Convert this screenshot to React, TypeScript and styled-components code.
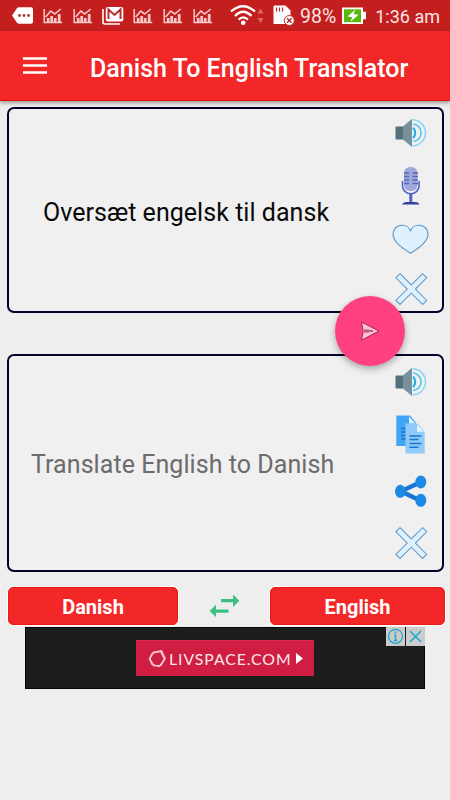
import React from "react";
import styled, { createGlobalStyle } from "styled-components";

const GlobalStyle = createGlobalStyle`
  * { box-sizing: border-box; }
  body { margin: 0; background: #eeeeee; font-family: Roboto, sans-serif; }
  svg { display: block; flex: none; }
`;

const Screen = styled.div`
  width: 450px;
  height: 800px;
  display: flex;
  flex-direction: column;
  background: #eeeeee;
  overflow: hidden;
`;

const StatusBar = styled.div`
  height: 31px;
  flex: none;
  display: flex;
  align-items: center;
  background: #c41f1f;
  color: #fbe4e4;
`;

const StatusText = styled.span<{ $left: number; $size: number }>`
  margin-left: ${(p) => p.$left}px;
  margin-top: 2px;
  font-size: ${(p) => p.$size}px;
  line-height: 24px;
  white-space: nowrap;
`;

const AppBar = styled.header`
  height: 70px;
  flex: none;
  display: flex;
  align-items: center;
  padding-left: 23px;
  background: #f32727;
  border-bottom: 1px solid #e21111;
  box-shadow: 0 2px 4px rgba(0, 0, 0, 0.35);
  z-index: 1;
`;

const Title = styled.h1`
  margin: 6px 0 0 43px;
  color: #fff;
  font-size: 25px;
  font-weight: 500;
  line-height: 32px;
  letter-spacing: 0.02px;
  white-space: nowrap;
`;

const Content = styled.main`
  display: flex;
  flex-direction: column;
  padding: 6px 6px 0 7px;
`;

const Panel = styled.section<{ $height: number }>`
  position: relative;
  height: ${(p) => p.$height}px;
  display: flex;
  border: 2px solid #02022c;
  border-radius: 7px;
  background: #f0f0f0;
  & + & { margin-top: 41px; }
`;

const PanelText = styled.div<{ $left: number; $top: number; $color: string; $spacing: number }>`
  flex: 1;
  padding: ${(p) => p.$top}px 0 0 ${(p) => p.$left}px;
  color: ${(p) => p.$color};
  font-size: 25px;
  line-height: 32px;
  letter-spacing: ${(p) => p.$spacing}px;
  white-space: nowrap;
`;

const Tools = styled.div<{ $top: number; $gap: number }>`
  width: 40px;
  margin-right: 12px;
  padding-top: ${(p) => p.$top}px;
  display: flex;
  flex-direction: column;
  gap: ${(p) => p.$gap}px;
`;

const SendButton = styled.button`
  position: absolute;
  left: 326px;
  top: 186.5px;
  width: 70px;
  height: 70px;
  padding: 0;
  border: 0;
  border-radius: 50%;
  display: grid;
  place-items: center;
  background: #ff4081;
  box-shadow: 0 3px 7px rgba(0, 0, 0, 0.3);
  z-index: 2;
`;

const LanguageRow = styled.div`
  display: flex;
  align-items: center;
  justify-content: space-between;
  margin: 15px -1px 0 1px;
  height: 38px;
`;

const LanguageButton = styled.button<{ $width: number }>`
  width: ${(p) => p.$width}px;
  height: 38px;
  padding: 2px 0 0;
  border: 1px solid #e91a1a;
  border-radius: 5px;
  background: #f32727;
  box-shadow: 0 0 0 1px #fff;
  color: #fff;
  font: 700 20px/24px Roboto, sans-serif;
`;

const Advert = styled.div`
  align-self: center;
  margin: 2px 1px 0 0;
  width: 400px;
  height: 62px;
  position: relative;
  display: flex;
  align-items: center;
  justify-content: center;
  background: #1c1e1d;
  border: 1px solid #050505;
`;

const AdvertBrand = styled.div`
  width: 178px;
  height: 36px;
  display: flex;
  align-items: center;
  padding-left: 12px;
  background: #cf1e42;
  border-top: 1px solid #e22a50;
  color: #fde6ea;
`;

const BrandName = styled.span`
  margin: 0 4px 0 3px;
  font: 400 15.8px/20px Lato, sans-serif;
  letter-spacing: 0.93px;
`;

const AdvertControls = styled.div`
  position: absolute;
  top: -1px;
  right: -1px;
  display: flex;
  gap: 1px;
`;

const ControlCell = styled.div`
  width: 19px;
  height: 19px;
  background: #cbcbcb;
`;

const ChartIcon = () => (
  <svg width="30" height="31" viewBox="-0.700 0 30 31" fill="none" stroke="#f6caca">
    <path d="M1.500 9v13.500H19.500" strokeWidth="1.500" />
    <path d="M5.500 22v-4M9 22v-6M12.500 22v-4M16.500 22v-8" strokeWidth="2.700" />
    <path d="M3 17l5-6 4 3 6-5" strokeWidth="1.600" />
  </svg>
);

const NotificationIcons = () => (
  <>
    <svg width="42" height="31" viewBox="0 0 42 31">
      <path d="M12 15.500l5-7.300Q17.700 7.200 19 7.200h12q2 0 2 2v12.600q0 2-2 2H19q-1.300 0-2-1z" fill="#fff" />
      <g fill="#a93535"><circle cx="19.500" cy="15.500" r="1.400" /><circle cx="24" cy="15.500" r="1.400" /><circle cx="28.500" cy="15.500" r="1.400" /></g>
    </svg>
    <ChartIcon />
    <ChartIcon />
    <svg width="30" height="31" viewBox="0 0 30 31">
      <path d="M1 9v13q0 2 2 2h15" fill="none" stroke="#fff" strokeWidth="1.600" />
      <rect x="3.800" y="7" width="17.500" height="14.500" rx="2" fill="#fff" />
      <path d="M6.500 19V9.500l6 5.500 6-5.500V19" fill="none" stroke="#b92c2c" strokeWidth="2" />
    </svg>
    <ChartIcon />
    <ChartIcon />
    <ChartIcon />
  </>
);

const SystemIcons = () => (
  <svg width="71" height="31" viewBox="0 0 71 31">
    <g fill="none" stroke="#fff" strokeWidth="2.300">
      <path d="M2 11.500q12-10.500 24 0" />
      <path d="M6 16q8-8.500 16.500 0M9.600 19.600q4.700-4.500 9.300 0" />
    </g>
    <circle cx="14.200" cy="22.800" r="2.300" fill="#fff" />
    <path d="M28.500 13.500l3-5 3 5zM28.500 18l3 5 3-5z" fill="#da6868" />
    <path d="M45.500 5.500h11l5 5V24h-17V7q0-1.500 1-1.500z" fill="#fff" />
    <path d="M47.500 7.500v4M50.500 7.500v4M53.500 7.500v4" stroke="#b92c2c" strokeWidth="1.200" />
    <circle cx="60.300" cy="20.500" r="5" fill="#fff" stroke="#b92c2c" />
    <path d="M58 18.200l4.600 4.600M62.600 18.200L58 22.800" stroke="#9d2c2c" strokeWidth="1.300" />
  </svg>
);

const BatteryIcon = () => (
  <svg width="33" height="31" viewBox="-1 0 33 31">
    <path d="M5 7.500h21v4.300h3v7.500h-3V24H5z" fill="#fff" />
    <path d="M7 9.300h17v12.900H7z" fill="#59b80b" />
    <path d="M18.500 9.500l-8 7 4.800.7-1.800 4.600 8-7-5-.7z" fill="#fff" />
  </svg>
);

const MenuIcon = () => (
  <svg width="24" height="18" viewBox="0 0 24 18">
    <path d="M0 1.600h24M0 8.500h24M0 15.500h24" stroke="#fff" strokeWidth="2.500" />
  </svg>
);

const SpeakerIcon = () => (
  <svg width="40" height="30" viewBox="0 0 40 30">
    <path d="M6 8.500h7v13H6q-.5 0-.5-1v-11q0-1 .5-1z" fill="#546e7a" />
    <path d="M13 8.500L22 .8V29l-9-7.500z" fill="#78909c" />
    <g fill="none" strokeWidth="1.500">
      <path d="M23.200 9.700q4 5.200 0 10.500" stroke="#18aee8" strokeWidth="2" />
      <path d="M23.200 6a8.800 8.800 0 0 1 0 17.500" stroke="#45c2f3" />
      <path d="M22.500 1.800a13 13 0 0 1 0 26" stroke="#85d6f7" />
    </g>
  </svg>
);

const MicIcon = () => (
  <svg width="40" height="39" viewBox="0 -1 40 39">
    <path d="M12.500 14v4.500a8.300 8.300 0 0 0 16.600 0V14" fill="none" stroke="#5361c4" strokeWidth="1.600" />
    <rect x="14" y="0" width="13.500" height="24" rx="6" fill="#9fa8da" />
    <path d="M14 6h5M22.500 6H28M14 9.500h5M22.500 9.500H28M14 13h5M22.500 13H28M14 16.500h5M22.500 16.500H28" stroke="#5967bd" strokeWidth="1.300" />
    <path d="M20.800 26.500V36" stroke="#5361c4" strokeWidth="3" />
    <path d="M12 37.500q1-2.500 5-2.500h7.500q4.500 0 5 2.500z" fill="#303f9f" />
  </svg>
);

const HeartIcon = () => (
  <svg width="40" height="32" viewBox="0 0 40 32">
    <path d="M20.500 8C17.500-.5 4 .5 3 11c0 8 9.500 14 17.500 19.300C28.500 25 38 19 38 11 37 .5 23.500-.5 20.500 8z" fill="#dff0fe" stroke="#669cc9" strokeWidth="1.200" strokeLinejoin="round" />
  </svg>
);

const CloseIcon = () => (
  <svg width="40" height="33" viewBox="0 0 40 33">
    <path d="M10 .7L21.300 12 32.600 .7 36.700 4.800 25.400 16.100 36.700 27.400 32.600 31.500 21.300 20.200 10 31.500 5.900 27.400 17.200 16.100 5.900 4.800z" fill="#dff0fe" stroke="#669cc9" strokeWidth="1.100" />
  </svg>
);

const CopyIcon = () => (
  <svg width="40" height="39" viewBox="0 1.500 40 39" overflow="visible">
    <path d="M6.300 0H20l6 7v23.500H6.300z" fill="#42a5f5" />
    <path d="M19 1l6.500 7H19z" fill="#e1f5fe" />
    <path d="M11 13h5M11 16.500h5M11 20h5M11 23.500h5" stroke="#1976d2" strokeWidth="1.500" />
    <path d="M15.500 8h12l7.200 8.300V38H15.500z" fill="#90caf9" />
    <path d="M27 8.800l7 7.500h-7z" fill="#e1f5fe" />
    <path d="M19.500 20.500h12M19.500 24h9M19.500 28h12M19.500 31.800h9" stroke="#1976d2" strokeWidth="1.500" />
  </svg>
);

const ShareIcon = () => (
  <svg width="40" height="32" viewBox="0 0 40 32">
    <path d="M31 7L11 16.300 31 26" fill="none" stroke="#1976d2" strokeWidth="4.500" />
    <g fill="#1e88e5"><ellipse cx="10.300" cy="16.300" rx="5.300" ry="6.500" /><ellipse cx="30.800" cy="7" rx="5.500" ry="6.500" /><ellipse cx="30.800" cy="25.300" rx="5.500" ry="6.500" /></g>
  </svg>
);

const SendIcon = () => (
  <svg width="20" height="20" viewBox="0 0 20 20">
    <path d="M1.500 1L19 10 1.500 19.200l1.200-7.200L13 10 2.700 8.200z" fill="#ffc1d5" stroke="#a52559" strokeWidth="1" strokeLinejoin="round" />
    <path d="M3 8.200L13 9.200v1.600L3 11.800z" fill="#ffc1d5" />
    <path d="M2.500 10H13" stroke="#8b2650" strokeWidth="1.200" />
  </svg>
);

const SwapIcon = () => (
  <svg width="31" height="24" viewBox="0 0 31 24" fill="#3dbf84">
    <path d="M12 5h12V.5L30.300 6.700 24 13V8.300H12zM19.500 18.800H7v4.200L.5 17 7 10.700v4.800h12.500z" />
  </svg>
);

const BrandMark = () => (
  <svg width="18" height="20" viewBox="0 0 18 20" fill="none" stroke="#f6c7d2">
    <path d="M5.500 3.200L13.500 2l3.500 7.500-4.200 7-7 .2L1.500 10z" strokeWidth="1.600" />
    <path d="M4 4.500l8.500-2 4 8-5.500 7-7.500-2.500-1.500-6z" strokeWidth="1.200" />
  </svg>
);

export default function App() {
  return (
    <>
      <GlobalStyle />
      <Screen>
        <StatusBar>
          <NotificationIcons />
          <svg width="7" height="31" />
          <SystemIcons />
          <StatusText $left={0} $size={19.5}>98%</StatusText>
          <BatteryIcon />
          <StatusText $left={6} $size={18}>1:36 am</StatusText>
        </StatusBar>
        <AppBar>
          <MenuIcon />
          <Title>Danish To English Translator</Title>
        </AppBar>
        <Content>
          <Panel $height={206}>
            <PanelText $left={34} $top={88} $color="#090909" $spacing={0.04}>Oversæt engelsk til dansk</PanelText>
            <Tools $top={8.5} $gap={18}>
              <SpeakerIcon />
              <MicIcon />
              <HeartIcon />
              <CloseIcon />
            </Tools>
            <SendButton aria-label="Translate"><SendIcon /></SendButton>
          </Panel>
          <Panel $height={218}>
            <PanelText $left={22} $top={93} $color="#6b6b6b" $spacing={0.06}>Translate English to Danish</PanelText>
            <Tools $top={11} $gap={19.5}>
              <SpeakerIcon />
              <CopyIcon />
              <ShareIcon />
              <CloseIcon />
            </Tools>
          </Panel>
          <LanguageRow>
            <LanguageButton $width={170}>Danish</LanguageButton>
            <SwapIcon />
            <LanguageButton $width={175}>English</LanguageButton>
          </LanguageRow>
          <Advert>
            <AdvertBrand>
              <BrandMark />
              <BrandName>LIVSPACE.COM</BrandName>
              <svg width="7" height="11" viewBox="0 0 7 11"><path d="M0 0l7 5.500L0 11z" fill="#fff" /></svg>
            </AdvertBrand>
            <AdvertControls>
              <ControlCell>
                <svg width="19" height="19" viewBox="0 0 19 19" fill="none" stroke="#18a9cf">
                  <circle cx="9.500" cy="9.300" r="7" strokeWidth="1.300" />
                  <path d="M9.500 4.500v2M9.500 8v6M8 8.200h1.500M7.800 13.500h3.400" strokeWidth="1.500" />
                </svg>
              </ControlCell>
              <ControlCell>
                <svg width="19" height="19" viewBox="0 0 19 19" fill="none" stroke="#18a9cf">
                  <path d="M4 4l11 11M15 4L4 15" strokeWidth="1.500" />
                </svg>
              </ControlCell>
            </AdvertControls>
          </Advert>
        </Content>
      </Screen>
    </>
  );
}
